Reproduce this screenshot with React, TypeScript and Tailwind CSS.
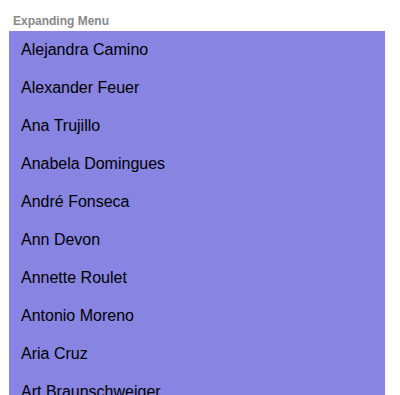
import React from "react";

const names = [
  "Alejandra Camino",
  "Alexander Feuer",
  "Ana Trujillo",
  "Anabela Domingues",
  "André Fonseca",
  "Ann Devon",
  "Annette Roulet",
  "Antonio Moreno",
  "Aria Cruz",
  "Art Braunschweiger",
  "Bernardo Batista",
];

export default function App() {
  return (
    <div
      className="w-[400px] h-[395px] overflow-hidden bg-white"
      style={{ fontFamily: '"Liberation Sans", Arial, sans-serif' }}
    >
      <div className="pt-[12px] pl-[9px] w-[385px]">
        <div className="pl-[4px] text-[12px] leading-[19px] font-bold text-[#888888]">
          Expanding Menu
        </div>
        <ul className="bg-[#8784e2]">
          {names.map((n) => (
            <li
              key={n}
              className="h-[38px] flex items-center pl-[12px] text-[16px] text-black"
            >
              {n}
            </li>
          ))}
        </ul>
      </div>
    </div>
  );
}
